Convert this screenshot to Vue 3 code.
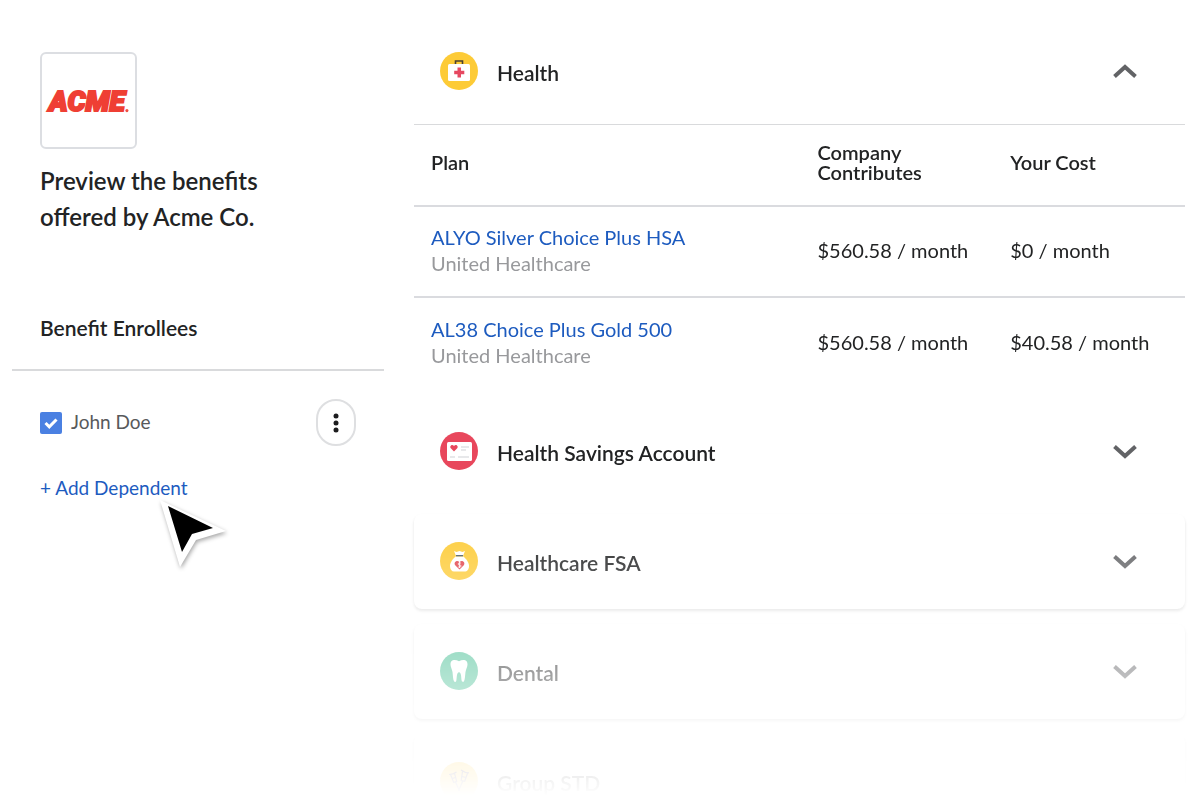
<script setup>
import { ref } from 'vue'

const enrolled = ref(true)
const healthOpen = ref(true)

const plans = [
  { name: 'ALYO Silver Choice Plus HSA', carrier: 'United Healthcare', company: '$560.58 / month', cost: '$0 / month' },
  { name: 'AL38 Choice Plus Gold 500', carrier: 'United Healthcare', company: '$560.58 / month', cost: '$40.58 / month' }
]

const sections = [
  { id: 'hsa', title: 'Health Savings Account' },
  { id: 'fsa', title: 'Healthcare FSA' },
  { id: 'dental', title: 'Dental' },
  { id: 'std', title: 'Group STD' }
]
</script>

<template>
  <div class="page">
    <aside class="sidebar">
      <div class="intro">
        <div class="logo">
          <svg viewBox="0 0 92 92" role="img" aria-label="Acme">
            <text x="7" y="56" class="logo-word">ACME</text>
            <circle cx="84" cy="56" r="1.5" fill="#f04e40" />
          </svg>
        </div>
        <h1>Preview the benefits offered by Acme Co.</h1>
      </div>
      <h2>Benefit Enrollees</h2>
      <div class="enrollee">
        <label class="person">
          <input v-model="enrolled" type="checkbox" />
          <span>John Doe</span>
        </label>
        <button class="more" type="button" aria-label="More options">
          <svg width="8" height="20" viewBox="0 0 8 20" fill="#1c1c1e">
            <circle cx="4" cy="3" r="2.5" /><circle cx="4" cy="10" r="2.5" /><circle cx="4" cy="17" r="2.5" />
          </svg>
        </button>
      </div>
      <div class="add">
        <a href="#add">+ Add Dependent</a>
        <svg class="pointer" width="76" height="76" viewBox="0 0 76 76" aria-hidden="true">
          <path d="M5 4 L71 35 L41 44 L25 71 Z" fill="#fff" />
          <path d="M13 10 L58 32 L37 38 L27 56 Z" fill="#000" />
        </svg>
      </div>
    </aside>

    <main class="benefits">
      <section class="card health">
        <button class="bar" type="button" :aria-expanded="healthOpen" @click="healthOpen = !healthOpen">
          <svg class="badge" viewBox="0 0 38 38">
            <circle cx="19" cy="19" r="19" fill="#fdcb37" />
            <path d="M15.500 12V9h7v3" fill="none" stroke="#4a4030" stroke-width="1.600" />
            <rect x="8" y="12" width="22" height="17" rx="1.500" fill="#fff" />
            <path d="M17.500 15.500h3.500v3.300h3.300v3.500H21v3.300h-3.500v-3.300h-3.300v-3.500h3.300z" fill="#e64860" />
          </svg>
          <span class="title">Health</span>
          <svg class="chevron" viewBox="0 0 26 16"><path d="M2.500 13.500 13 4l10.500 9.500" /></svg>
        </button>
        <table v-if="healthOpen">
          <thead>
            <tr><th scope="col">Plan</th><th scope="col">Company<br />Contributes</th><th scope="col">Your Cost</th></tr>
          </thead>
          <tbody>
            <tr v-for="plan in plans" :key="plan.name">
              <td>
                <a href="#plan">{{ plan.name }}</a>
                <span class="carrier">{{ plan.carrier }}</span>
              </td>
              <td>{{ plan.company }}</td>
              <td>{{ plan.cost }}</td>
            </tr>
          </tbody>
        </table>
      </section>

      <section v-for="s in sections" :key="s.id" class="card" :class="s.id">
        <button class="bar" type="button" aria-expanded="false">
          <svg v-if="s.id === 'hsa'" class="badge" viewBox="0 0 38 38">
            <circle cx="19" cy="19" r="19" fill="#e8475c" />
            <rect x="7" y="10" width="25" height="19" rx="1.500" fill="#fff" />
            <path d="M14 19.500l-3.200-3.200c-1.600-2 1.200-4.700 3.200-2.300 2-2.400 4.800.3 3.200 2.300z" fill="#e8475c" />
            <path d="M21 15h8M21 18h5M10 25h5M18 25h11" stroke="#dfe1e4" stroke-width="1.600" />
          </svg>
          <svg v-else-if="s.id === 'fsa'" class="badge" viewBox="0 0 38 38">
            <circle cx="19" cy="19" r="19" fill="#fdcb37" />
            <path d="M15.500 14.500C13 17 10 20 10 24c0 3.500 1.800 5.500 4 5.500h10.500c2.700 0 4.500-2 4.500-5.500 0-4-3-7-5.500-9.500z" fill="#fff" />
            <path d="M14 9l2.500 1L19.500 9l3 1L25 9l-1.800 4.500h-7.400z" fill="#fff" />
            <path d="M16 13.700h7" stroke="#33495f" stroke-width="1.200" />
            <path d="M19.500 27.500l-4.300-4.300c-2-2.700 1.800-6 4.300-3 2.500-3 6.300.3 4.300 3z" fill="#e2444c" />
            <path d="M21 21h-1.800a1 1 0 0 0 0 2h.8a1 1 0 0 1 0 2h-1.800M19.500 20v6" fill="none" stroke="#fff" stroke-width=".8" />
          </svg>
          <svg v-else-if="s.id === 'dental'" class="badge" viewBox="0 0 38 38">
            <circle cx="19" cy="19" r="19" fill="#42bd91" />
            <path d="M19 9.200C15.500 7.500 10.500 7 10.500 12.500c0 2.500 1.500 4.500 2 7.500.5 3.500.4 7.500 1.500 9.300.7 1 2 .9 2.300-.5.600-2.500.2-8.600 2.700-8.600s2.100 6.100 2.700 8.600c.3 1.400 1.600 1.500 2.300.5 1.100-1.800 1-5.800 1.500-9.300.5-3 2-5 2-7.500C27.500 7 22.500 7.500 19 9.200z" fill="#fff" />
          </svg>
          <svg v-else class="badge" viewBox="0 0 38 38">
            <circle cx="19" cy="19" r="19" fill="#fdcb37" />
            <g fill="none" stroke="#4b3b5c" stroke-width="1.200">
              <path d="M9 12.500q4.500 0 7.500-2.500M10.500 12.500l3.200 8 3-1.200-2.200-8M12.300 16.500l3.200-1M15.500 20l4 9" />
              <path d="M21 8q3.500 2.800 8 2.800M22.500 9.500l-1.300 9 3.500.8 3-8.500M22 14.500l4 1M22.800 19l-4.300 10" />
            </g>
          </svg>
          <span class="title">{{ s.title }}</span>
          <svg v-if="s.id !== 'std'" class="chevron" viewBox="0 0 26 16"><path d="M2.500 3.500 13 13 23.500 3.500" /></svg>
        </button>
      </section>
    </main>
  </div>
</template>

<style>
html,
body {
  background: #fff;
  overflow: hidden;
}
</style>

<style scoped>
* {
  box-sizing: border-box;
}

.page {
  display: grid;
  grid-template-columns: 372px minmax(0, 1fr);
  gap: 30px;
  padding: 18px 15px 0 12px;
  color: #222324;
  font-family: Lato, "Noto Sans", sans-serif;
  font-size: 20px;
}

.page a {
  color: #1d5bbf;
  text-decoration: none;
}

button {
  border: 0;
  background: none;
  color: inherit;
  font: inherit;
  cursor: pointer;
}

.sidebar {
  padding-top: 34px;
}

.intro {
  padding: 0 28px;
}

.logo {
  width: 97px;
  height: 97px;
  border: 2px solid #dcdee2;
  border-radius: 6px;
}

.logo svg {
  display: block;
  width: 100%;
}

.logo-word {
  fill: #ef3f34;
  stroke: #ef3f34;
  stroke-width: 2px;
  font: italic 900 28px Roboto, sans-serif;
}

h1 {
  max-width: 240px;
  margin: 14px 0 0;
  font-size: 24px;
  font-weight: 600;
  line-height: 36px;
}

h2 {
  margin: 0;
  padding: 80px 28px 28px;
  border-bottom: 2px solid #d9dadc;
  font-size: 21px;
  font-weight: 600;
  line-height: 26px;
}

.enrollee {
  display: flex;
  align-items: center;
  justify-content: space-between;
  padding: 28px;
}

.person {
  display: flex;
  align-items: center;
  gap: 9px;
  color: #58595b;
  font-size: 19px;
  line-height: 22px;
}

.person span {
  padding-bottom: 2px;
}

.person input {
  appearance: none;
  width: 22px;
  height: 22px;
  margin: 0;
  border-radius: 2px;
  background: #4a80e2;
}

.person input:checked {
  background: #4a80e2 url("data:image/svg+xml,%3Csvg xmlns='http://www.w3.org/2000/svg' viewBox='0 0 22 22'%3E%3Cpath d='M5.500 11l3.800 3.800L16.500 7.500' fill='none' stroke='white' stroke-width='3'/%3E%3C/svg%3E");
}

.more {
  display: flex;
  align-items: center;
  justify-content: center;
  width: 40px;
  height: 47px;
  padding: 0;
  border: 2px solid #dedfe1;
  border-radius: 20px;
}

.add {
  position: relative;
  padding: 0 28px;
  font-size: 19px;
  line-height: 28px;
}

.pointer {
  position: absolute;
  top: 22px;
  left: 143px;
  filter: drop-shadow(1px 2px 2px rgba(0, 0, 0, 0.35));
}

.benefits {
  display: flex;
  flex-direction: column;
  gap: 15px;
  -webkit-mask-image: linear-gradient(#000 494px, transparent 778px);
  mask-image: linear-gradient(#000 494px, transparent 778px);
  margin: 0 -15px 0 -5px;
  padding: 0 15px 0 5px;
}

.card {
  border-radius: 8px;
}

.fsa,
.dental,
.std {
  box-shadow: 0 2px 3px rgba(0, 0, 0, 0.12);
}

.bar {
  display: flex;
  align-items: center;
  gap: 19px;
  width: 100%;
  height: 95px;
  padding: 0 47px 0 26px;
  text-align: left;
}

.health .bar {
  height: 106px;
}

.badge {
  flex: none;
  width: 38px;
  height: 38px;
}

.title {
  flex: 1;
  padding-top: 3px;
  font-size: 21px;
  font-weight: 600;
  line-height: 26px;
}

.chevron {
  flex: none;
  width: 26px;
  height: 16px;
  fill: none;
  stroke: #626366;
  stroke-width: 4;
}

table {
  width: 100%;
  border-collapse: collapse;
  table-layout: fixed;
}

th,
td {
  padding: 0 0 0 18px;
  text-align: left;
  vertical-align: middle;
}

th:first-child,
td:first-child {
  padding-left: 17px;
}

th {
  height: 81px;
  padding-bottom: 6px;
  border-top: 1px solid #d9dadc;
  font-weight: 600;
  line-height: 20px;
}

th:first-child {
  width: 50%;
}

td {
  height: 91px;
  padding-bottom: 3px;
  border-top: 2px solid #dadbdf;
  line-height: 26px;
}

tbody tr:last-child td {
  height: 92px;
}

td a,
.carrier {
  display: block;
}

.carrier {
  color: #98999c;
}
</style>
